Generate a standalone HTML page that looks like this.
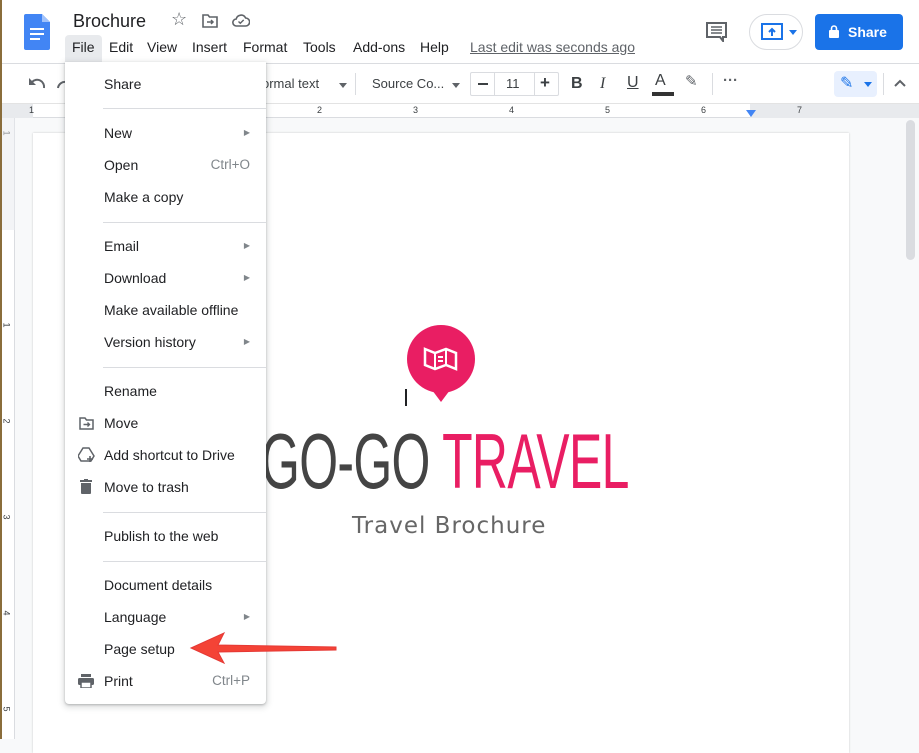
<!DOCTYPE html>
<html><head><meta charset="utf-8">
<style>
*{box-sizing:border-box;margin:0;padding:0}
body{width:919px;height:739px;overflow:hidden;position:relative;background:#f8f9fa;font-family:"Liberation Sans",Arial,sans-serif;color:#3c4043}
.abs{position:absolute}
#top{left:0;top:0;width:919px;height:64px;background:#fff;border-bottom:1px solid #dadce0}
#tb{left:0;top:64px;width:919px;height:39px;background:#fff}
#ruler{left:0;top:103px;width:919px;height:15px;background:#fff;border-top:1px solid #e3e3e3;border-bottom:1px solid #dadce0}
#vr{left:0;top:118px;width:15px;height:621px;background:#fff;border-right:1px solid #dadce0}
#page{left:33px;top:133px;width:816px;height:620px;background:#fff;box-shadow:0 0 2px rgba(0,0,0,.2)}
.mi{position:absolute;left:0;width:201px;height:32px;font-size:14px;line-height:32px;padding-left:39px;color:#202124}
.mi .k{position:absolute;right:16px;top:0;color:#80868b;font-size:13.5px}
.mi .ar{position:absolute;right:16px;top:0;color:#80868b;font-size:8px}
.sep{position:absolute;left:38px;right:0;height:1px;background:#dadce0}
#menu{left:65px;top:62px;width:201px;height:642px;background:#fff;border-radius:0 0 4px 4px;box-shadow:0 2px 6px 2px rgba(60,64,67,.15),0 1px 2px rgba(60,64,67,.3)}
.menub span{position:absolute;top:39px;font-size:14px;color:#202124}
</style></head><body>
<div class="abs" style="left:0;top:0;width:2px;height:739px;background:#8a6d3b;z-index:20"></div>
<div id="top" class="abs">
 <svg class="abs" style="left:24px;top:14px" width="26" height="36" viewBox="0 0 26 36"><path d="M2 0h16l8 8v26a2 2 0 0 1-2 2H2a2 2 0 0 1-2-2V2a2 2 0 0 1 2-2z" fill="#4285f4"/><path d="M18 0v8h8z" fill="#a1c2fa"/><rect x="6" y="14" width="14" height="2" fill="#fff"/><rect x="6" y="19" width="14" height="2" fill="#fff"/><rect x="6" y="24" width="10" height="2" fill="#fff"/></svg>
 <div class="abs" style="left:73px;top:11px;font-size:18px;color:#202124">Brochure</div>
 <div class="abs" style="left:171px;top:9px;font-size:18px;color:#5f6368">☆</div>
 <svg class="abs" style="left:202px;top:14px" width="16" height="14" viewBox="0 0 16 14"><path d="M1 1h5l1.5 2H15v10H1z" fill="none" stroke="#5f6368" stroke-width="1.6"/><path d="M5 8h6M9 6l2 2-2 2" fill="none" stroke="#5f6368" stroke-width="1.5"/></svg>
 <svg class="abs" style="left:232px;top:14px" width="18" height="13" viewBox="0 0 18 13"><path d="M4.5 12a3.5 3.5 0 0 1-.3-7A5 5 0 0 1 13.6 4a4 4 0 0 1 0 8z" fill="none" stroke="#5f6368" stroke-width="1.6"/><path d="M6.5 7.5l1.8 1.8 3.4-3.4" fill="none" stroke="#5f6368" stroke-width="1.4"/></svg>
 <div class="menub">
  <div class="abs" style="left:65px;top:35px;width:37px;height:29px;background:#e8eaed;border-radius:4px 4px 0 0"></div>
  <span style="left:72px">File</span><span style="left:109px">Edit</span><span style="left:147px">View</span><span style="left:192px">Insert</span><span style="left:243px">Format</span><span style="left:303px">Tools</span><span style="left:353px">Add-ons</span><span style="left:420px">Help</span>
  <span style="left:470px;color:#5f6368;text-decoration:underline">Last edit was seconds ago</span>
 </div>
 <svg class="abs" style="left:706px;top:22px" width="21" height="20" viewBox="0 0 21 20"><path d="M1 1h19v14h-3v4l-3-4H1z" fill="none" stroke="#5f6368" stroke-width="2"/><path d="M5 5h11M5 8h11M5 11h11" stroke="#5f6368" stroke-width="1.5"/></svg>
 <div class="abs" style="left:749px;top:14px;width:54px;height:36px;border:1px solid #dadce0;border-radius:18px"></div>
 <svg class="abs" style="left:761px;top:23px" width="22" height="18" viewBox="0 0 22 18"><rect x="1" y="1" width="20" height="15" fill="none" stroke="#1a73e8" stroke-width="2"/><path d="M11 13V6M8 9l3-3 3 3" fill="none" stroke="#1a73e8" stroke-width="2"/></svg>
 <div class="abs" style="left:789px;top:30px;border:4px solid transparent;border-top:5px solid #1a73e8"></div>
 <div class="abs" style="left:815px;top:14px;width:88px;height:36px;background:#1a73e8;border-radius:4px;color:#fff;font-size:14px;font-weight:bold;line-height:36px;padding-left:33px">Share</div>
 <svg class="abs" style="left:829px;top:25px" width="10" height="13" viewBox="0 0 10 13"><rect x="0" y="5" width="10" height="8" rx="1" fill="#fff"/><path d="M2.5 5V3.5a2.5 2.5 0 0 1 5 0V5" fill="none" stroke="#fff" stroke-width="1.6"/></svg>
</div>
<div id="tb" class="abs">
 <svg class="abs" style="left:28px;top:13px" width="18" height="12" viewBox="0 0 18 12"><path d="M16 11A7 7 0 0 0 4 5" fill="none" stroke="#5f6368" stroke-width="2"/><path d="M1 1v7h7z" fill="#5f6368"/></svg>
 <svg class="abs" style="left:56px;top:13px" width="10" height="12" viewBox="0 0 10 12"><path d="M2 11A7 7 0 0 1 10 5" fill="none" stroke="#5f6368" stroke-width="2"/></svg>
 <div class="abs" style="left:262px;top:12px;font-size:13px;color:#3c4043">ormal text</div>
 <div class="abs" style="left:339px;top:19px;border:4px solid transparent;border-top:5px solid #5f6368"></div>
 <div class="abs" style="left:355px;top:9px;width:1px;height:22px;background:#dadce0"></div>
 <div class="abs" style="left:372px;top:12px;font-size:13px;color:#3c4043">Source Co...</div>
 <div class="abs" style="left:452px;top:19px;border:4px solid transparent;border-top:5px solid #5f6368"></div>
 <div class="abs" style="left:470px;top:8px;width:89px;height:24px;border:1px solid #dadce0;border-radius:2px"></div>
 <div class="abs" style="left:494px;top:8px;width:1px;height:24px;background:#dadce0"></div>
 <div class="abs" style="left:534px;top:8px;width:1px;height:24px;background:#dadce0"></div>
 <div class="abs" style="left:478px;top:19px;width:10px;height:2px;background:#3c4043"></div>
 <div class="abs" style="left:506px;top:12px;font-size:13px">11</div>
 <div class="abs" style="left:540px;top:9px;font-size:17px;font-weight:bold">+</div>
 <div class="abs" style="left:571px;top:11px;font-size:16px;font-weight:bold">B</div>
 <div class="abs" style="left:600px;top:11px;font-size:16px;font-style:italic;font-family:'Liberation Serif',serif">I</div>
 <div class="abs" style="left:627px;top:10px;font-size:16px;text-decoration:underline">U</div>
 <div class="abs" style="left:655px;top:8px;font-size:16px">A</div>
 <div class="abs" style="left:652px;top:28px;width:22px;height:4px;background:#333"></div>
 <div class="abs" style="left:685px;top:8px;font-size:15px;color:#5f6368">✎</div>
 <div class="abs" style="left:712px;top:9px;width:1px;height:22px;background:#dadce0"></div>
 <div class="abs" style="left:723px;top:8px;font-size:15px;font-weight:bold;color:#5f6368">···</div>
 <div class="abs" style="left:834px;top:7px;width:43px;height:26px;background:#e8f0fe;border-radius:4px"></div>
 <div class="abs" style="left:840px;top:9px;font-size:16px;color:#1a73e8">✎</div>
 <div class="abs" style="left:864px;top:18px;border:4px solid transparent;border-top:5px solid #1a73e8"></div>
 <div class="abs" style="left:883px;top:9px;width:1px;height:22px;background:#dadce0"></div>
 <svg class="abs" style="left:894px;top:15px" width="12" height="8" viewBox="0 0 12 8"><path d="M1 7l5-5 5 5" fill="none" stroke="#5f6368" stroke-width="2"/></svg>
</div>
<div id="ruler" class="abs">
 <div class="abs" style="left:750px;top:0;width:169px;height:14px;background:#e8eaed"></div>
 <div class="abs" style="left:0;top:0;width:33px;height:14px;background:#e8eaed"></div>
 <div class="abs" style="left:29px;top:1px;font-size:9px;color:#3c4043">1</div>
 <div class="abs" style="left:317px;top:1px;font-size:9px">2</div><div class="abs" style="left:413px;top:1px;font-size:9px">3</div><div class="abs" style="left:509px;top:1px;font-size:9px">4</div><div class="abs" style="left:605px;top:1px;font-size:9px">5</div><div class="abs" style="left:701px;top:1px;font-size:9px">6</div><div class="abs" style="left:797px;top:1px;font-size:9px">7</div>
 <div class="abs" style="left:746px;top:6px;border:5px solid transparent;border-top:7px solid #4285f4"></div>
</div>
<div id="vr" class="abs">
 <div class="abs" style="left:4px;top:10px;font-size:9px;transform:rotate(90deg)">1</div>
 <div class="abs" style="left:4px;top:202px;font-size:9px;transform:rotate(90deg)">1</div>
 <div class="abs" style="left:4px;top:298px;font-size:9px;transform:rotate(90deg)">2</div>
 <div class="abs" style="left:4px;top:394px;font-size:9px;transform:rotate(90deg)">3</div>
 <div class="abs" style="left:4px;top:490px;font-size:9px;transform:rotate(90deg)">4</div>
 <div class="abs" style="left:4px;top:586px;font-size:9px;transform:rotate(90deg)">5</div>
 <div class="abs" style="left:0;top:0;width:15px;height:112px;background:#e8eaed;opacity:.5"></div>
</div>
<div class="abs" style="left:906px;top:120px;width:9px;height:140px;background:#dadce0;border-radius:5px"></div>
<div id="page" class="abs">
 <svg class="abs" style="left:373px;top:192px" width="70" height="80" viewBox="0 0 70 80"><circle cx="35" cy="34" r="34" fill="#e91e63"/><path d="M26 65h18l-9 12z" fill="#e91e63"/><path d="M19 24l10 4 11-4 10 4v16l-10-4-11 4-10-4z" fill="none" stroke="#fff" stroke-width="2.5"/><path d="M29 28v16M40 24v16M32 32h5M32 36h5" stroke="#fff" stroke-width="2"/></svg>
 <div class="abs" style="left:372px;top:256px;width:2px;height:17px;background:#202124"></div>
 <div class="abs" style="left:228px;top:283px;font-family:'Liberation Sans',sans-serif;font-size:78px;letter-spacing:-1px;transform:scaleX(.64);transform-origin:left;white-space:nowrap;color:#444">GO-GO <span style="color:#e91e63">TRAVEL</span></div>
 <div class="abs" style="left:319px;top:380px;font-family:'DejaVu Sans',sans-serif;font-size:23px;color:#666;letter-spacing:1px;white-space:nowrap">Travel Brochure</div>
</div>
<div id="menu" class="abs">
 <div class="mi" style="top:6px">Share</div>
 <div class="sep" style="top:46px"></div>
 <div class="mi" style="top:55px">New<span class="ar">▶</span></div>
 <div class="mi" style="top:87px">Open<span class="k">Ctrl+O</span></div>
 <div class="mi" style="top:119px">Make a copy</div>
 <div class="sep" style="top:160px"></div>
 <div class="mi" style="top:168px">Email<span class="ar">▶</span></div>
 <div class="mi" style="top:200px">Download<span class="ar">▶</span></div>
 <div class="mi" style="top:232px">Make available offline</div>
 <div class="mi" style="top:264px">Version history<span class="ar">▶</span></div>
 <div class="sep" style="top:305px"></div>
 <div class="mi" style="top:313px">Rename</div>
 <div class="mi" style="top:345px">Move</div>
 <div class="mi" style="top:377px">Add shortcut to Drive</div>
 <div class="mi" style="top:409px">Move to trash</div>
 <div class="sep" style="top:450px"></div>
 <div class="mi" style="top:458px">Publish to the web</div>
 <div class="sep" style="top:499px"></div>
 <div class="mi" style="top:507px">Document details</div>
 <div class="mi" style="top:539px">Language<span class="ar">▶</span></div>
 <div class="mi" style="top:571px">Page setup</div>
 <div class="mi" style="top:603px">Print<span class="k">Ctrl+P</span></div>
 <svg class="abs" style="left:14px;top:355px" width="15" height="13" viewBox="0 0 15 13"><path d="M1 1h5l1.5 2H14v9H1z" fill="none" stroke="#5f6368" stroke-width="1.5"/><path d="M4.5 7.5h6M8.5 5.5l2 2-2 2" fill="none" stroke="#5f6368" stroke-width="1.4"/></svg>
 <svg class="abs" style="left:13px;top:385px" width="17" height="16" viewBox="0 0 17 16"><path d="M5 1h6l5 8-3 5H3L0 9z" fill="none" stroke="#5f6368" stroke-width="1.5"/><path d="M12 9v6M9 12h6" stroke="#5f6368" stroke-width="1.6"/></svg>
 <svg class="abs" style="left:15px;top:417px" width="12" height="15" viewBox="0 0 12 15"><rect x="0" y="1" width="12" height="2" fill="#5f6368"/><rect x="4" y="0" width="4" height="2" fill="#5f6368"/><path d="M1 4h10v10a1 1 0 0 1-1 1H2a1 1 0 0 1-1-1z" fill="#5f6368"/></svg>
 <svg class="abs" style="left:13px;top:612px" width="16" height="14" viewBox="0 0 16 14"><rect x="3" y="0" width="10" height="3" fill="#5f6368"/><rect x="0" y="4" width="16" height="7" rx="1.5" fill="#5f6368"/><rect x="3" y="8" width="10" height="6" fill="#fff" stroke="#5f6368" stroke-width="1.5"/></svg>
</div>
<svg class="abs" style="left:188px;top:630px" width="150" height="35" viewBox="0 0 150 35"><path d="M3 18L36 3 30 15 148 17 148 20 30 22 36 33z" fill="#f44336" stroke="#e53935" stroke-width="1"/></svg>
</body></html>
